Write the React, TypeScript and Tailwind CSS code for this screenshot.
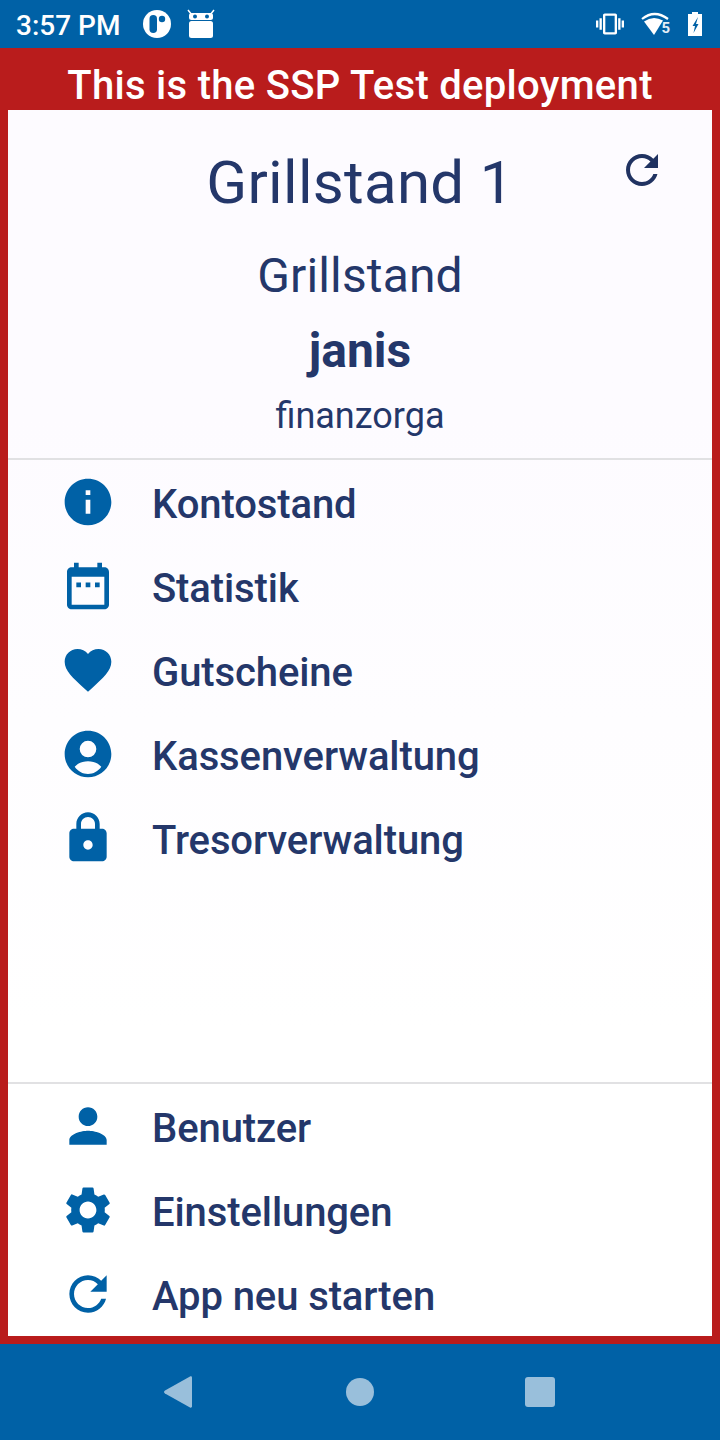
import type { ReactNode } from 'react';

const paths = {
  info: 'M12 2C6.48 2 2 6.48 2 12s4.48 10 10 10 10-4.48 10-10S17.52 2 12 2zm1 15h-2v-6h2v6zm0-8h-2V7h2v2z',
  calendar:
    'M19 4h-1V2h-2v2H8V2H6v2H5c-1.1 0-2 .9-2 2v14c0 1.1.9 2 2 2h14c1.1 0 2-.9 2-2V6c0-1.1-.9-2-2-2zm0 16H5V8h14v12zM7 10.500h2v2H7zm4 0h2v2h-2zm4 0h2v2h-2z',
  heart:
    'M12 21.35l-1.45-1.32C5.4 15.36 2 12.28 2 8.5 2 5.42 4.42 3 7.5 3c1.74 0 3.41.81 4.5 2.09C13.09 3.81 14.76 3 16.5 3 19.58 3 22 5.42 22 8.5c0 3.78-3.4 6.86-8.55 11.54L12 21.35z',
  account:
    'M12 2C6.48 2 2 6.48 2 12s4.48 10 10 10 10-4.48 10-10S17.52 2 12 2zm0 4.3a3.56 3.56 0 1 1 0 7.12 3.56 3.56 0 0 1 0-7.12zM6.3 17.5C7.7 15.9 9.7 15.1 12 15.1s4.3.8 5.7 2.4C16.3 19.5 14.3 20.6 12 20.6s-4.3-1.1-5.7-3.1z',
  lock: 'M18 8h-1V6c0-2.76-2.24-5-5-5S7 3.24 7 6v2H6c-1.1 0-2 .9-2 2v10c0 1.1.9 2 2 2h12c1.1 0 2-.9 2-2V10c0-1.1-.9-2-2-2zm-6 9c-1.1 0-2-.9-2-2s.9-2 2-2 2 .9 2 2-.9 2-2 2zM9 8V6c0-1.66 1.34-3 3-3s3 1.34 3 3v2H9z',
  person: 'M12 12c2.21 0 4-1.79 4-4s-1.79-4-4-4-4 1.79-4 4 1.79 4 4 4zm0 2c-2.67 0-8 1.34-8 4v2h16v-2c0-2.66-5.33-4-8-4z',
  settings:
    'M19.14 12.94c.04-.3.06-.61.06-.94 0-.32-.02-.64-.07-.94l2.03-1.58c.18-.14.23-.41.12-.61l-1.92-3.32c-.12-.22-.37-.29-.59-.22l-2.39.96c-.5-.38-1.03-.7-1.62-.94l-.36-2.54c-.04-.24-.24-.41-.48-.41h-3.84c-.24 0-.43.17-.47.41l-.36 2.54c-.59.24-1.13.57-1.62.94l-2.39-.96c-.22-.08-.47 0-.59.22L2.74 8.87c-.12.21-.08.47.12.61l2.03 1.58c-.05.3-.09.63-.09.94s.02.64.07.94l-2.03 1.58c-.18.14-.23.41-.12.61l1.92 3.32c.12.22.37.29.59.22l2.39-.96c.5.38 1.03.7 1.62.94l.36 2.54c.05.24.24.41.48.41h3.84c.24 0 .44-.17.47-.41l.36-2.54c.59-.24 1.13-.56 1.62-.94l2.39.96c.22.08.47 0 .59-.22l1.92-3.32c.12-.22.07-.47-.12-.61l-2.01-1.58zM12 15.6c-1.98 0-3.6-1.62-3.6-3.6s1.62-3.6 3.6-3.6 3.6 1.62 3.6 3.6-1.62 3.6-3.6 3.6z',
  refresh:
    'M17.65 6.35C16.2 4.9 14.21 4 12 4c-4.42 0-7.99 3.58-7.99 8s3.57 8 7.99 8c3.73 0 6.84-2.55 7.73-6h-2.08c-.82 2.33-3.04 4-5.65 4-3.31 0-6-2.69-6-6s2.69-6 6-6c1.66 0 3.14.69 4.22 1.78L13 11h7V4l-2.35 2.35z',
};

function Icon({ d, className }: { d: string; className: string }) {
  return (
    <svg viewBox="0 0 24 24" fill="currentColor" fillRule="evenodd" className={className}>
      <path d={d} />
    </svg>
  );
}

function MenuRow({ icon, children }: { icon: string; children: ReactNode }) {
  return (
    <div className="flex h-[84px] shrink-0 items-center pl-[52px]">
      <Icon d={icon} className="mb-[5px] h-14 w-14 shrink-0 text-[#0061a6]" />
      <span className="ml-[36px] mt-[2px] text-[40px] font-medium leading-[48px] tracking-[-0.1px] text-[#24376a]">{children}</span>
    </div>
  );
}

function StatusBar() {
  return (
    <div className="flex h-12 shrink-0 items-center bg-[#0061a6] pl-4 pr-[18px] text-white">
      <span className="mt-[3px] text-[28px] font-medium leading-none">3:57 PM</span>
      <svg viewBox="0 0 28 28" className="ml-[23px] h-7 w-7">
        <circle cx="14" cy="14" r="14" fill="#fff" />
        <rect x="6.500" y="5" width="7.500" height="18" rx="3.750" fill="#0061a6" />
        <circle cx="19" cy="9" r="3.200" fill="#0061a6" />
      </svg>
      <svg viewBox="0 0 28 30" className="ml-4 h-[30px] w-7">
        <path d="M1 1l4 5M27 1l-4 5" stroke="#fff" strokeWidth="1.5" />
        <rect x="2" y="4" width="24" height="7" rx="2.500" fill="#fff" />
        <rect x="2" y="12" width="24" height="17" rx="2.500" fill="#fff" />
        <circle cx="8" cy="7.500" r="2" fill="#0061a6" />
        <circle cx="20" cy="7.500" r="2" fill="#0061a6" />
      </svg>
      <div className="ml-auto flex items-center">
        <svg viewBox="0 0 24 24" fill="currentColor" className="h-7 w-7">
          <path d="M0 15h2V9H0v6zm3 2h2V7H3v10zm19-8v6h2V9h-2zm-3 8h2V7h-2v10zM16.5 3h-9C6.67 3 6 3.67 6 4.500v15c0 .83.67 1.5 1.5 1.5h9c.83 0 1.5-.67 1.5-1.5v-15c0-.83-.67-1.5-1.5-1.5zM16 19H8V5h8v14z" />
        </svg>
        <div className="relative ml-[17px] h-6 w-7">
          <svg viewBox="0 0 28 24" className="h-6 w-7">
            <path d="M1 7 Q13.500 -3 27 7" fill="none" stroke="#fff" strokeWidth="2.2" />
            <path d="M3 9.500 Q12 3 22 8.500 L13 23z" fill="#fff" />
          </svg>
          <span className="absolute -right-px bottom-[2px] text-[15px] font-bold leading-[11px] text-[#e3eef7]">5</span>
        </div>
        <svg viewBox="0 0 14 24" className="ml-[19px] h-6 w-[14px]">
          <path d="M4 0h6v2h4v22H0V2h4z" fill="#fff" />
          <path d="M10 5L4.500 14H7L5.500 21L10.500 12H8z" fill="#0061a6" />
        </svg>
      </div>
    </div>
  );
}

function NavBar() {
  return (
    <div className="flex h-24 shrink-0 items-center justify-center bg-[#0061a6] pr-[1px] text-[#99bfdb]">
      <svg viewBox="0 0 28 32" className="h-8 w-7" fill="currentColor">
        <path d="M26 .5c.9-.5 2 0 2 1v29c0 1-1.100 1.500-2 1L1 17.500c-1.300-.8-1.300-2.200 0-3z" />
      </svg>
      <div className="ml-[154px] h-7 w-7 rounded-full bg-[#99bfdb]" />
      <div className="ml-[151px] h-[30px] w-[30px] rounded-[3px] bg-[#99bfdb]" />
    </div>
  );
}

export default function App() {
  return (
    <div className="flex h-[1440px] w-[720px] flex-col bg-[#b91c1c] font-['Roboto',sans-serif]">
      <StatusBar />
      <div className="flex h-[62px] shrink-0 items-center justify-center pt-[14px] text-[40px] font-medium leading-none tracking-[0.3px] text-white">
        This is the SSP Test deployment
      </div>
      <div className="mx-2 mb-2 flex min-h-0 flex-1 flex-col overflow-hidden bg-gradient-to-b from-[#fdfbff] from-25% to-white to-75%">
        <div className="relative flex h-[350px] shrink-0 flex-col items-center border-b-2 border-[#e1e1e3] text-[#24376a]">
          <h1 className="mt-[36px] text-[60px] leading-[74px] tracking-[0.3px]">Grillstand 1</h1>
          <p className="mt-[30px] text-[48px] leading-[52px] tracking-[0.15px]">Grillstand</p>
          <p className="mt-[23px] text-[48px] font-bold leading-[52px]">janis</p>
          <p className="mt-[19px] text-[36px] leading-[40px]">finanzorga</p>
          <Icon d={paths.refresh} className="absolute left-[610px] top-[36px] h-12 w-12 text-[#203261]" />
        </div>
        <div className="min-h-0 flex-1 pt-[2px]">
          <MenuRow icon={paths.info}>Kontostand</MenuRow>
          <MenuRow icon={paths.calendar}>Statistik</MenuRow>
          <MenuRow icon={paths.heart}>Gutscheine</MenuRow>
          <MenuRow icon={paths.account}>Kassenverwaltung</MenuRow>
          <MenuRow icon={paths.lock}>Tresorverwaltung</MenuRow>
        </div>
        <div className="h-[254px] shrink-0 overflow-hidden border-t-2 border-[#e1e1e3] pt-[2px]">
          <MenuRow icon={paths.person}>Benutzer</MenuRow>
          <MenuRow icon={paths.settings}>Einstellungen</MenuRow>
          <MenuRow icon={paths.refresh}>App neu starten</MenuRow>
        </div>
      </div>
      <NavBar />
    </div>
  );
}
